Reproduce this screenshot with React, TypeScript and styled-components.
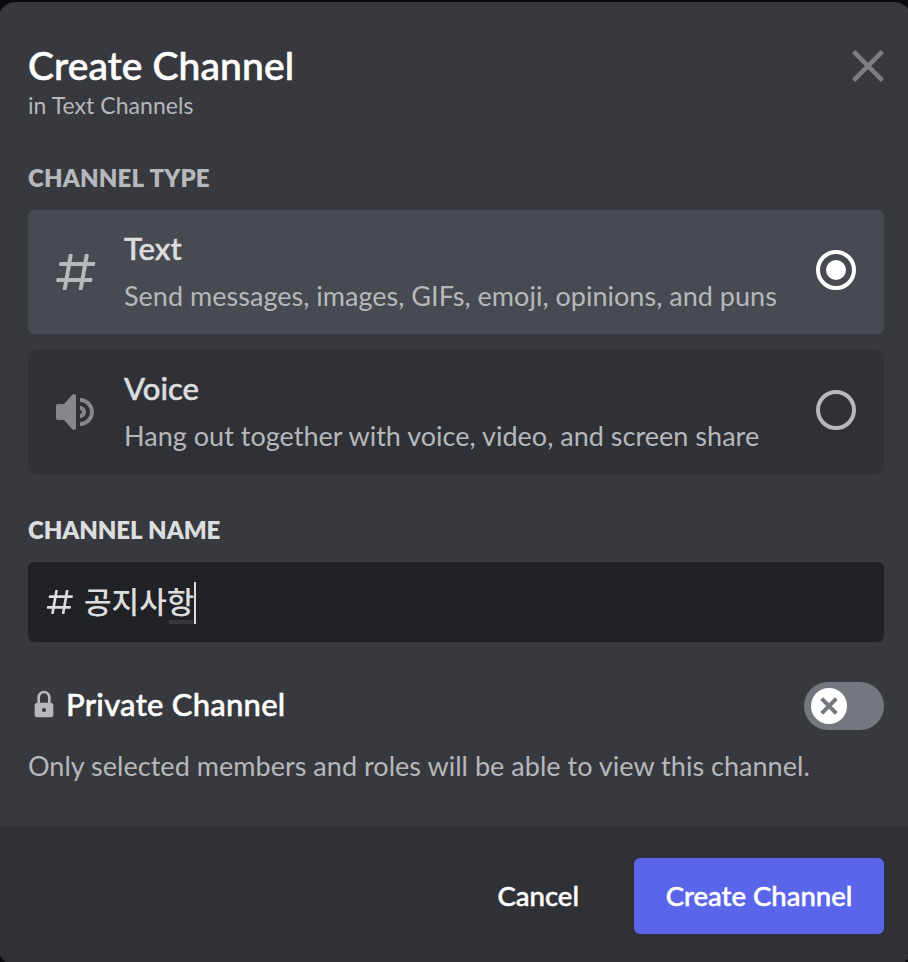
import React, { useState } from 'react';
import styled, { createGlobalStyle } from 'styled-components';

const GlobalStyle = createGlobalStyle`
  *, *::before, *::after { box-sizing: border-box; }
  body { margin: 0; background: #0b0b0d; }
  button { border: 0; padding: 0; background: none; font: inherit; cursor: pointer; }
`;

const Backdrop = styled.div`
  display: flex;
  width: 908px;
  height: 962px;
  padding-top: 2px;
  overflow: hidden;
  background: #0b0b0d;
  font-family: Lato, 'Noto Sans CJK KR', sans-serif;
`;

const Modal = styled.section`
  display: flex;
  flex-direction: column;
  flex: none;
  width: 914px;
  height: 963px;
  margin-left: -2px;
  border-radius: 18px;
  overflow: hidden;
  background: #38393e;
  color: #fff;
`;

const Body = styled.div`
  display: flex;
  flex-direction: column;
  height: 824px;
  padding: 39px 28px 0 30px;
`;

const Header = styled.header`
  display: flex;
  justify-content: space-between;
  align-items: flex-start;
  height: 78px;
`;

const Title = styled.h1`
  margin: 0 0 1px;
  font-size: 39px;
  font-weight: 500;
  line-height: 49px;
  letter-spacing: 0.1px;
  -webkit-text-stroke: 0.6px currentColor;
`;

const Subtitle = styled.div`
  color: #b6b8bc;
  font-size: 23px;
  line-height: 28px;
  letter-spacing: 0.05px;
`;

const CloseButton = styled.button`
  display: flex;
  margin: 1px -8px 0 0;
  color: #7d7e82;
`;

const Icon = styled.svg<{ $size: number }>`
  display: block;
  flex: none;
  width: ${(p) => p.$size}px;
  height: ${(p) => p.$size}px;
  fill: currentColor;
`;

const Label = styled.h2<{ $bright?: boolean; $top: number }>`
  margin: ${(p) => p.$top}px 0 20px;
  color: ${(p) => (p.$bright ? '#dcddde' : '#b6b8bc')};
  font-size: 24px;
  font-weight: 800;
  line-height: 24px;
  letter-spacing: ${(p) => (p.$bright ? '-0.1px' : '0.15px')};
  word-spacing: 1px;
`;

const Options = styled.div`
  display: flex;
  flex-direction: column;
  gap: 16px;
`;

const Option = styled.div<{ $selected: boolean }>`
  display: flex;
  align-items: center;
  height: 124px;
  padding: 0 28px 0 24px;
  border-radius: 6px;
  background: ${(p) => (p.$selected ? '#474a50' : '#303136')};
`;

const OptionIcon = styled.div<{ $selected: boolean }>`
  margin-right: 24px;
  color: ${(p) => (p.$selected ? '#b6b8bc' : '#86878b')};
`;

const OptionText = styled.div`
  flex: 1;
  margin-bottom: 4px;
`;

const OptionTitle = styled.div`
  margin-bottom: 12px;
  color: #dcddde;
  font-size: 31px;
  font-weight: 500;
  line-height: 40px;
  -webkit-text-stroke: 0.5px currentColor;
`;

const OptionHint = styled.div`
  color: #b6b8bc;
  font-size: 27px;
  line-height: 32px;
  letter-spacing: 0.02px;
  white-space: nowrap;
`;

const Radio = styled.div<{ $selected: boolean }>`
  display: grid;
  place-items: center;
  width: 40px;
  height: 40px;
  margin-bottom: 4px;
  border: 4px solid ${(p) => (p.$selected ? '#fff' : '#b6b8bc')};
  border-radius: 50%;

  &::after {
    content: '';
    width: 20px;
    height: 20px;
    border-radius: 50%;
    background: ${(p) => (p.$selected ? '#fff' : 'transparent')};
  }
`;

const NameField = styled.div`
  display: flex;
  align-items: center;
  height: 80px;
  padding-left: 16px;
  border-radius: 6px;
  background: #212226;
  color: #dcddde;
`;

const NameValue = styled.div`
  display: flex;
  align-items: center;
  height: 42px;
  margin: 2px 0 0 8px;
  font-family: 'Noto Sans CJK KR', sans-serif;
  font-size: 30px;
  font-weight: 500;
  line-height: 36px;
  border-right: 2px solid #dcddde;
`;

const Committed = styled.span`
  height: 42px;
`;

const Composing = styled.span`
  height: 42px;
  background: linear-gradient(#38393b, #38393b) 2px 100% / 24px 4px no-repeat;
`;

const PrivateRow = styled.div`
  display: flex;
  justify-content: space-between;
  height: 48px;
  margin-top: 40px;
`;

const PrivateTitle = styled.div`
  display: flex;
  align-items: center;
  gap: 6px;
  height: 44px;
  font-size: 31px;
  font-weight: 500;
  letter-spacing: 0.25px;
  -webkit-text-stroke: 0.5px currentColor;
`;

const LockIcon = styled(Icon)`
  color: #b6b8bc;
`;

const Toggle = styled.button`
  display: flex;
  align-items: center;
  width: 80px;
  height: 48px;
  padding-left: 7px;
  border-radius: 24px;
  background: #74777e;
`;

const Knob = styled.span`
  display: block;
  width: 36px;
  height: 36px;
  border-radius: 50%;
  background: #fff;
  color: #74777e;
`;

const Note = styled.p`
  margin: 18px 0 0;
  color: #b6b8bc;
  font-size: 27px;
  line-height: 36px;
  letter-spacing: 0.03px;
  white-space: nowrap;
`;

const Footer = styled.footer`
  display: flex;
  justify-content: flex-end;
  flex: 1;
  gap: 55px;
  padding: 32px 28px 0;
  background: #303136;
`;

const CancelButton = styled.button`
  && {
    height: 76px;
    padding-bottom: 2px;
    color: #fff;
    font-size: 27.5px;
    font-weight: 500;
    -webkit-text-stroke: 0.5px currentColor;
  }
`;

const SubmitButton = styled(CancelButton)`
  && {
    width: 250px;
    border-radius: 6px;
    background: #5b65ea;
  }
`;

const HASH =
  'M5.88657 21C5.57547 21 5.3399 20.7189 5.39427 20.4126L6.00001 17H2.59511C2.28449 17 2.04905 16.7198 2.10259 16.4138L2.27759 15.4138C2.31946 15.1746 2.52722 15 2.77011 15H6.35001L7.41001 9H4.00511C3.69449 9 3.45905 8.71977 3.51259 8.41381L3.68759 7.41381C3.72946 7.17456 3.93722 7 4.18011 7H7.76001L8.39677 3.41262C8.43914 3.17391 8.64664 3 8.88907 3H9.87344C10.1845 3 10.4201 3.28107 10.3657 3.58738L9.76001 7H15.76L16.3968 3.41262C16.4391 3.17391 16.6466 3 16.8891 3H17.8734C18.1845 3 18.4201 3.28107 18.3657 3.58738L17.76 7H21.1649C21.4755 7 21.711 7.28023 21.6574 7.58619L21.4824 8.58619C21.4406 8.82544 21.2328 9 20.9899 9H17.41L16.35 15H19.7549C20.0655 15 20.301 15.2802 20.2474 15.5862L20.0724 16.5862C20.0306 16.8254 19.8228 17 19.5799 17H16L15.3632 20.5874C15.3209 20.8261 15.1134 21 14.8709 21H13.8866C13.5755 21 13.3399 20.7189 13.3943 20.4126L14 17H8.00001L7.36325 20.5874C7.32088 20.8261 7.11337 21 6.87094 21H5.88657ZM9.41045 9L8.35045 15H14.3504L15.4104 9H9.41045Z';
const SPEAKER =
  'M11.383 3.07904C11.009 2.92504 10.579 3.01004 10.293 3.29604L6 8.00204H3C2.45 8.00204 2 8.45304 2 9.00204V15.002C2 15.552 2.45 16.002 3 16.002H6L10.293 20.71C10.579 20.996 11.009 21.082 11.383 20.927C11.757 20.772 12 20.407 12 20.002V4.00204C12 3.59904 11.757 3.23204 11.383 3.07904ZM14 5.00195V7.00195C16.757 7.00195 19 9.24595 19 12.002C19 14.759 16.757 17.002 14 17.002V19.002C17.86 19.002 21 15.863 21 12.002C21 8.14295 17.86 5.00195 14 5.00195ZM14 9.00195C15.654 9.00195 17 10.349 17 12.002C17 13.657 15.654 15.002 14 15.002V13.002C14.551 13.002 15 12.553 15 12.002C15 11.451 14.551 11.002 14 11.002V9.00195Z';
const LOCK =
  'M17 11V7C17 4.243 14.756 2 12 2C9.242 2 7 4.243 7 7V11C5.897 11 5 11.896 5 13V20C5 21.103 5.897 22 7 22H17C18.103 22 19 21.103 19 20V13C19 11.896 18.103 11 17 11ZM12 18C11.172 18 10.5 17.328 10.5 16.5C10.5 15.672 11.172 15 12 15C12.828 15 13.5 15.672 13.5 16.5C13.5 17.328 12.828 18 12 18ZM15 11H9V7C9 5.346 10.346 4 12 4C13.654 4 15 5.346 15 7V11Z';
const CLOSE =
  'M18.4 4L12 10.4L5.6 4L4 5.6L10.4 12L4 18.4L5.6 20L12 13.6L18.4 20L20 18.4L13.6 12L20 5.6L18.4 4Z';

const CHANNEL_TYPES = [
  { id: 'text', name: 'Text', icon: HASH, hint: 'Send messages, images, GIFs, emoji, opinions, and puns' },
  { id: 'voice', name: 'Voice', icon: SPEAKER, hint: 'Hang out together with voice, video, and screen share' },
];

export default function App() {
  const [type, setType] = useState('text');

  return (
    <Backdrop>
      <GlobalStyle />
      <Modal role="dialog" aria-label="Create Channel">
        <Body>
          <Header>
            <div>
              <Title>Create Channel</Title>
              <Subtitle>in Text Channels</Subtitle>
            </div>
            <CloseButton aria-label="Close">
              <Icon $size={48} viewBox="0 0 24 24">
                <path d={CLOSE} />
              </Icon>
            </CloseButton>
          </Header>

          <Label $top={47}>CHANNEL TYPE</Label>
          <Options role="radiogroup">
            {CHANNEL_TYPES.map((t) => {
              const selected = t.id === type;
              return (
                <Option key={t.id} role="radio" aria-checked={selected} $selected={selected} onClick={() => setType(t.id)}>
                  <OptionIcon $selected={selected}>
                    <Icon $size={48} viewBox="0 0 24 24">
                      <path d={t.icon} fillRule="evenodd" />
                    </Icon>
                  </OptionIcon>
                  <OptionText>
                    <OptionTitle>{t.name}</OptionTitle>
                    <OptionHint>{t.hint}</OptionHint>
                  </OptionText>
                  <Radio $selected={selected} />
                </Option>
              );
            })}
          </Options>

          <Label $bright $top={44}>CHANNEL NAME</Label>
          <NameField>
            <Icon $size={32} viewBox="0 0 24 24">
              <path d={HASH} fillRule="evenodd" />
            </Icon>
            <NameValue>
              <Committed>공지사</Committed>
              <Composing>항</Composing>
            </NameValue>
          </NameField>

          <PrivateRow>
            <PrivateTitle>
              <LockIcon $size={32} viewBox="0 0 24 24">
                <path d={LOCK} fillRule="evenodd" />
              </LockIcon>
              Private Channel
            </PrivateTitle>
            <Toggle role="switch" aria-checked={false} aria-label="Private Channel">
              <Knob>
                <Icon $size={36} viewBox="0 0 20 20">
                  <path d="M5.13231 6.72963L6.7233 5.13864L14.855 13.2704L13.264 14.8614L5.13231 6.72963Z" />
                  <path d="M13.2704 5.13864L14.8614 6.72963L6.72963 14.8614L5.13864 13.2704L13.2704 5.13864Z" />
                </Icon>
              </Knob>
            </Toggle>
          </PrivateRow>
          <Note>Only selected members and roles will be able to view this channel.</Note>
        </Body>
        <Footer>
          <CancelButton>Cancel</CancelButton>
          <SubmitButton>Create Channel</SubmitButton>
        </Footer>
      </Modal>
    </Backdrop>
  );
}
